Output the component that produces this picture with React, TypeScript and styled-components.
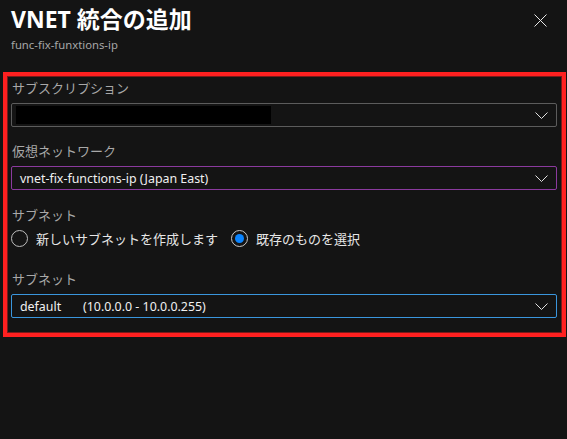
import React from 'react';
import styled, { createGlobalStyle } from 'styled-components';

const GlobalStyle = createGlobalStyle`
  html, body {
    margin: 0;
    padding: 0;
    background: #141414;
  }
  body {
    font-family: "Segoe UI", "Noto Sans", "Noto Sans CJK JP", sans-serif;
    color: #e6e6e6;
  }
`;

const Page = styled.div`
  width: 567px;
  height: 439px;
  background: #141414;
  overflow: hidden;
`;

const Header = styled.div`
  display: flex;
  justify-content: space-between;
  align-items: flex-start;
  padding: 5px 20px 0 11px;
  height: 67px;
  box-sizing: border-box;
`;

const TitleBlock = styled.div`
  display: flex;
  flex-direction: column;
`;

const Title = styled.h1`
  margin: 0;
  font-size: 23px;
  font-weight: 700;
  line-height: 28px;
  color: #ffffff;
  font-family: "Segoe UI", "Noto Sans", "Noto Sans CJK JP", sans-serif;
`;

const Subtitle = styled.div`
  font-size: 11.3px;
  line-height: 18px;
  color: #a6a6a6;
  margin-top: 3px;
`;

const CloseButton = styled.button`
  margin-top: 8px;
  width: 14px;
  height: 14px;
  padding: 0;
  border: none;
  background: none;
  display: flex;
  align-items: center;
  justify-content: center;
`;

const Highlight = styled.div`
  margin: 5px 1px 0 3px;
  border: 4.5px solid #ff2020;
  box-shadow: inset 0 0 0 1px #7a1a1a;
  padding: 3px 5px 14px 4px;
  height: 265px;
  box-sizing: border-box;
  display: flex;
  flex-direction: column;
`;

const Label = styled.div<{ $gap?: number }>`
  font-size: 13px;
  line-height: 18px;
  color: #a8a8a8;
  margin-top: ${p => p.$gap ?? 0}px;
  padding-left: 1px;
`;

const Select = styled.div<{ $border: string }>`
  position: relative;
  height: 24px;
  box-sizing: border-box;
  border: 1px solid ${p => p.$border};
  border-radius: 2px;
  margin-top: 6px;
  display: flex;
  align-items: center;
  padding-left: 8px;
  font-size: 12.4px;
  color: #f0f0f0;
`;

const Redacted = styled.div`
  width: 255px;
  height: 18px;
  background: #000;
  margin-left: -4px;
`;

const Chevron = styled.svg`
  position: absolute;
  right: 8px;
  top: 8px;
`;

const RadioRow = styled.div`
  display: flex;
  align-items: center;
  margin-top: 4px;
  height: 20px;
  gap: 13px;
`;

const RadioOption = styled.label`
  display: flex;
  align-items: center;
  gap: 8px;
  font-size: 13px;
  color: #e6e6e6;
`;

const RadioCircle = styled.span<{ $checked?: boolean }>`
  width: 17px;
  height: 17px;
  box-sizing: border-box;
  border-radius: 50%;
  border: 1px solid ${p => (p.$checked ? '#c8c8c8' : '#bdbdbd')};
  display: flex;
  align-items: center;
  justify-content: center;
  &::after {
    content: '';
    display: ${p => (p.$checked ? 'block' : 'none')};
    width: 9px;
    height: 9px;
    border-radius: 50%;
    background: #0a84ff;
  }
`;

const Name = styled.span`
  width: 63px;
`;

const ChevronIcon = () => (
  <Chevron width="13" height="7" viewBox="0 0 13 7">
    <path d="M0.5 0.5 L6.5 6.5 L12.5 0.5" fill="none" stroke="#e0e0e0" strokeWidth="1" />
  </Chevron>
);

const App: React.FC = () => {
  return (
    <Page>
      <GlobalStyle />
      <Header>
        <TitleBlock>
          <Title>VNET 統合の追加</Title>
          <Subtitle>func-fix-funxtions-ip</Subtitle>
        </TitleBlock>
        <CloseButton aria-label="close">
          <svg width="13" height="13" viewBox="0 0 13 13">
            <path d="M0.5 0.5 L12.5 12.5 M12.5 0.5 L0.5 12.5" stroke="#e8e8e8" strokeWidth="1" />
          </svg>
        </CloseButton>
      </Header>

      <Highlight>
        <Label>サブスクリプション</Label>
        <Select $border="#5c5c5c">
          <Redacted />
          <ChevronIcon />
        </Select>

        <Label $gap={15}>仮想ネットワーク</Label>
        <Select $border="#8b3a9e">
          vnet-fix-functions-ip (Japan East)
          <ChevronIcon />
        </Select>

        <Label $gap={16}>サブネット</Label>
        <RadioRow>
          <RadioOption>
            <RadioCircle />
            新しいサブネットを作成します
          </RadioOption>
          <RadioOption>
            <RadioCircle $checked />
            既存のものを選択
          </RadioOption>
        </RadioRow>

        <Label $gap={22}>サブネット</Label>
        <Select $border="#3a96dd">
          <Name>default</Name>
          (10.0.0.0 - 10.0.0.255)
          <ChevronIcon />
        </Select>
      </Highlight>
    </Page>
  );
};

export default App;
